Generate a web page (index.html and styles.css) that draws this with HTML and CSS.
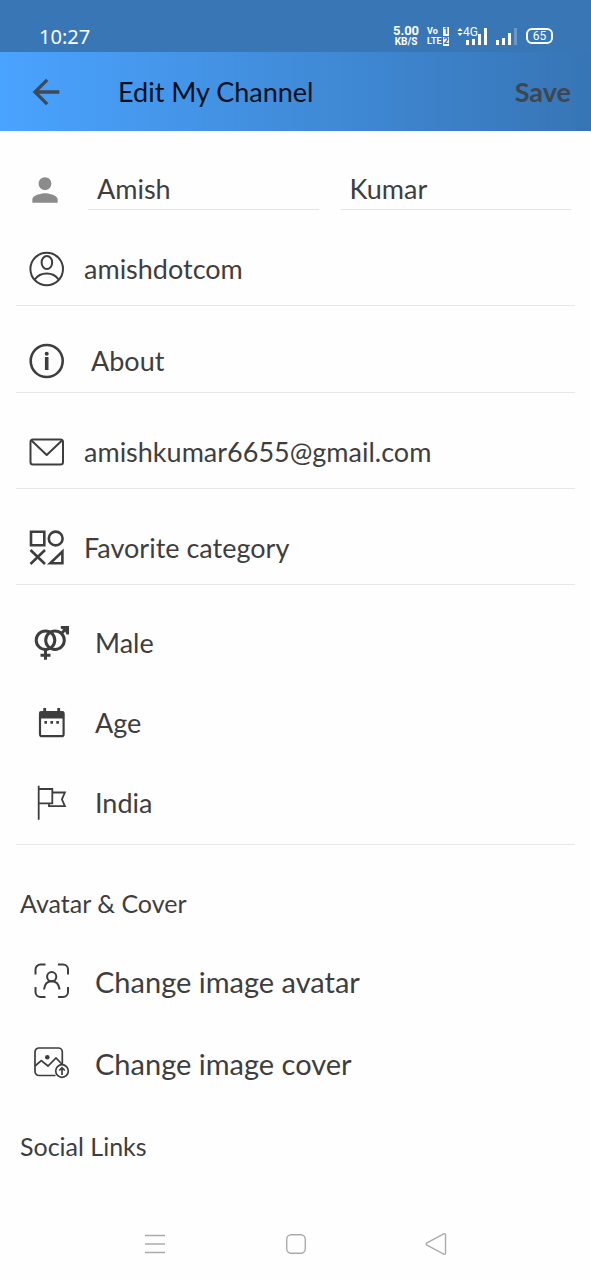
FILE: index.html
```html
<!DOCTYPE html>
<html lang="en">
<head>
<meta charset="utf-8">
<meta name="viewport" content="width=device-width, initial-scale=1">
<title>Edit My Channel</title>
<link rel="stylesheet" href="styles.css">
</head>
<body>
<div class="status-bar">
  <span class="clock">10:27</span>
  <div class="status-icons">
    <div class="speed"><span>5.00</span><span class="unit">KB/S</span></div>
    <div class="volte">
      <span>Vo<b class="sim">1</b></span>
      <span>LTE<b class="sim">2</b></span>
    </div>
    <div class="network">
      <svg class="data-arrows" viewBox="0 0 6 10" aria-hidden="true"><path d="M.4 4 3 1l2.600 3zM.4 6 3 9l2.600-3z"/></svg>
      <span class="generation">4G</span>
      <svg class="bars" viewBox="0 0 22 18" aria-hidden="true"><path d="M0 13h3v5H0zM6 12h3v6H6zM12 7h3v11h-3zM18 1h3v17h-3z"/></svg>
    </div>
    <svg class="bars" viewBox="0 0 22 18" aria-hidden="true"><path d="M0 13h3v5H0zM6 11h3v7H6zM12 6h3v12h-3z"/><path class="faint" d="M18 1h3v17h-3z"/></svg>
    <span class="battery">65</span>
  </div>
</div>

<header class="app-bar">
  <button class="back" type="button" aria-label="Back">
    <svg viewBox="0 0 24 24"><path d="M20 11H7.830l5.590-5.590L12 4l-8 8 8 8 1.410-1.410L7.830 13H20v-2z"/></svg>
  </button>
  <h1 class="title">Edit My Channel</h1>
  <button class="save" type="submit" form="channel">Save</button>
</header>

<main class="content">
  <form id="channel">
    <div class="names">
      <svg class="person" viewBox="0 0 24 24" aria-hidden="true"><path d="M12 12c2.210 0 4-1.790 4-4s-1.790-4-4-4-4 1.790-4 4 1.790 4 4 4zm0 2c-2.670 0-8 1.340-8 4v2h16v-2c0-2.660-5.330-4-8-4z"/></svg>
      <input class="name" type="text" value="Amish" aria-label="First name">
      <input class="name" type="text" value="Kumar" aria-label="Last name">
    </div>

    <div class="field">
      <svg class="icon" viewBox="0 0 36 36" aria-hidden="true"><g stroke-width="2"><circle cx="17.700" cy="18" r="16.300"/><ellipse cx="17.900" cy="11.500" rx="5.300" ry="6.600"/><path d="M5.800 28.500C8.500 24.500 12.800 22.500 17.700 22.500s9.200 2 11.900 6"/></g></svg>
      <input class="value" type="text" value="amishdotcom" aria-label="Username">
    </div>

    <div class="field field-about">
      <svg class="icon" viewBox="0 0 36 36" aria-hidden="true"><circle cx="17.700" cy="18" r="16" stroke-width="2.600"/><path d="M17.700 14v13" stroke-width="3.600"/><circle class="solid" cx="17.700" cy="10.700" r="2"/></svg>
      <input class="value" type="text" value="About" aria-label="About">
    </div>

    <div class="field">
      <svg class="icon" viewBox="0 0 36 36" aria-hidden="true"><g stroke-width="2" stroke-linejoin="round"><rect x="1.500" y="5.500" width="32.500" height="25" rx="2.500"/><path d="M2.500 6.500 17.700 21 33 6.500"/></g></svg>
      <input class="value" type="email" value="amishkumar6655@gmail.com" aria-label="Email">
    </div>

    <div class="field">
      <svg class="icon" viewBox="0 0 36 36" aria-hidden="true"><g stroke-width="2.600"><path d="M2 1.800h13.300v13.400H2z"/><circle cx="26.700" cy="8.500" r="6.900"/><path d="m1.500 20 14.500 14M16 20 1.500 34M33.400 21.500v11.800H21.200z"/></g></svg>
      <button class="value" type="button">Favorite category</button>
    </div>

    <div class="options">
      <button class="option" type="button">
        <svg class="icon" viewBox="0 0 36 36" aria-hidden="true"><g stroke-width="3"><circle cx="11.500" cy="16.200" r="9.300"/><circle cx="21" cy="16.200" r="9.300"/><path d="M11.500 25.500v10.300M6.500 31.200h10M27.300 9.500l5-5"/></g><path class="solid" d="M26.800 2H35v8.500h-2.500L31 7l-1-1-3.200-1.400z"/></svg>
        Male
      </button>
      <button class="option" type="button">
        <svg class="icon" viewBox="0 0 36 36" aria-hidden="true"><rect x="6" y="8" width="23.600" height="24.200" rx="2" stroke-width="2.200"/><path class="solid" d="M5.500 7.500h24.600v7H5.500zM9.300 4h2.800v4H9.300zM23.300 4h2.800v4h-2.800zM10.400 17H13v2.800h-2.600zM16.400 17H19v2.800h-2.600zM22.300 17h2.600v2.800h-2.600z"/></svg>
        Age
      </button>
      <button class="option" type="button">
        <svg class="icon" viewBox="0 0 36 36" aria-hidden="true"><g stroke-width="1.800"><path d="M4.700 1.700v34M4.700 5h13.600v14.300H4.700M18.300 8.500h12.600l-3 6.800 3 6.800H15v-2.800"/></g></svg>
        India
      </button>
    </div>

    <h2 class="section">Avatar &amp; Cover</h2>
    <button class="option option-large" type="button">
      <svg class="icon" viewBox="0 0 36 36" aria-hidden="true"><g stroke-width="2"><path d="M1.500 11.500v-5a5 5 0 0 1 5-5h5M24 1.500h5a5 5 0 0 1 5 5v5M34 24v5a5 5 0 0 1-5 5h-5M11.500 34h-5a5 5 0 0 1-5-5v-5"/><circle cx="17.700" cy="13.700" r="4.600"/><path d="M10 26.500c.6-5 3.300-8.200 7.700-8.200s7.200 3.200 7.900 8.200"/></g></svg>
      Change image avatar
    </button>
    <button class="option option-large" type="button">
      <svg class="icon" viewBox="0 0 36 36" aria-hidden="true"><g stroke-width="1.700"><path d="M21.500 30.500H5a4 4 0 0 1-4-4V7a4 4 0 0 1 4-4h19.300a4 4 0 0 1 4 4v12.500"/><path d="m1 21 6.300-5.300L14 21l8-8 6.300 6.500"/><circle cx="28" cy="26" r="6.300"/><path d="M28 30v-7.200m-2.800 2.700 2.800-2.800 2.800 2.800"/></g><circle class="solid" cx="13.300" cy="12.300" r="2.300"/></svg>
      Change image cover
    </button>

    <h2 class="section section-last">Social Links</h2>
  </form>
</main>

<nav class="system-nav" aria-label="System">
  <button type="button" aria-label="Recent apps"><svg viewBox="0 0 22 22"><path d="M1 2.500h20M1 11h20M1 19.500h20"/></svg></button>
  <button type="button" aria-label="Home"><svg viewBox="0 0 22 22"><rect x="1.700" y="1.700" width="18.600" height="18.600" rx="4.500"/></svg></button>
  <button type="button" aria-label="Back"><svg viewBox="0 0 22 22"><path d="M18.700.8 2 9.800q-1.700 1.200 0 2.400l16.700 9q1.800.6 1.800-1.200V2q0-1.800-1.800-1.200z"/></svg></button>
</nav>
</body>
</html>
```
FILE: styles.css
```css
* {
  box-sizing: border-box;
}

body {
  margin: 0;
  min-height: 100vh;
  display: flex;
  flex-direction: column;
  background: #fefefe;
  color: #3e3e3e;
  font-family: Lato, "Open Sans", sans-serif;
  font-size: 27px;
}

button,
input {
  margin: 0;
  padding: 0;
  border: 0;
  border-radius: 0;
  background: none;
  color: inherit;
  font: inherit;
  text-align: left;
}

svg {
  display: block;
  flex: none;
}

.status-bar {
  display: flex;
  align-items: center;
  justify-content: space-between;
  height: 52px;
  padding: 20px 38px 0 39px;
  background: #3876b6;
  color: #fff;
}

.clock {
  font-family: "Noto Sans", sans-serif;
  font-size: 20px;
}

.status-icons {
  display: flex;
  align-items: center;
  gap: 8px;
  font-family: Roboto, sans-serif;
}

.speed,
.volte {
  display: flex;
  flex-direction: column;
  align-items: center;
  font-size: 13px;
  line-height: 12px;
  font-weight: 700;
}

.unit {
  font-size: 10px;
  line-height: 10px;
}

.volte {
  align-items: stretch;
  gap: 1px;
  width: 22px;
  font-size: 9px;
  line-height: 9px;
}

.volte span {
  display: flex;
  justify-content: space-between;
}

.sim {
  width: 6px;
  background: #fff;
  color: #3876b6;
  text-align: center;
}

.network {
  display: flex;
  align-items: flex-start;
}

.network .bars {
  margin-left: -12px;
}

.data-arrows {
  width: 6px;
  height: 10px;
  fill: #fff;
}

.generation {
  font-size: 12px;
  line-height: 10px;
}

.bars {
  width: 22px;
  height: 18px;
  fill: #fff;
}

.faint {
  opacity: 0.25;
}

.battery {
  width: 27px;
  border: 2px solid #fff;
  border-radius: 6px;
  font-size: 12px;
  line-height: 12px;
  text-align: center;
}

.app-bar {
  display: flex;
  align-items: center;
  height: 79px;
  padding: 0 20px 0 26px;
  background: linear-gradient(90deg, #4aa3ff, #3775b5);
}

.back svg {
  width: 40px;
  height: 40px;
  fill: #3e4a56;
}

.title {
  flex: 1;
  margin: 0 0 0 52px;
  color: #07101c;
  font-size: 27px;
  font-weight: 400;
}

.save {
  color: #3e4650;
  font-weight: 700;
}

.content {
  flex: 1;
  padding: 38px 16px 0;
}

.names {
  display: grid;
  grid-template-columns: 50px 1fr 1fr;
  column-gap: 22px;
  align-items: center;
  padding: 0 4px 0 0;
}

.person {
  width: 38px;
  height: 38px;
  margin-left: 10px;
  fill: #8b8b8b;
}

.name {
  min-width: 0;
  width: 100%;
  height: 41px;
  padding: 0 9px 2px;
  border-bottom: 1px solid #e6e6e6;
}

.field {
  display: flex;
  align-items: center;
  gap: 19px;
  padding: 38px 13px 15px;
  border-bottom: 1px solid #e8e8e8;
}

.field-about {
  gap: 26px;
  padding-top: 34px;
  padding-bottom: 10px;
}

.value {
  flex: 1;
  min-width: 0;
  height: 42px;
  padding-bottom: 2px;
}

.icon {
  width: 36px;
  height: 36px;
  fill: none;
  stroke: #3e3e3e;
}

.solid {
  fill: #3e3e3e;
  stroke: none;
}

.options {
  padding: 17px 0 2px;
  border-bottom: 1px solid #e8e8e8;
}

.option {
  display: flex;
  align-items: center;
  gap: 25px;
  width: 100%;
  height: 80px;
  padding-left: 18px;
}

.option-large {
  height: 82px;
  font-size: 29px;
}

.section {
  margin: 42px 4px 21px;
  font-size: 25px;
  font-weight: 400;
  line-height: 32px;
}

.section-last {
  margin-top: 26px;
}

.system-nav {
  display: flex;
  align-items: center;
  justify-content: center;
  gap: 20%;
  height: 72px;
}

.system-nav button {
  flex: 0 0 22px;
}

.system-nav svg {
  width: 22px;
  height: 22px;
  fill: none;
  stroke: #aaa;
  stroke-width: 1.4;
}
```
